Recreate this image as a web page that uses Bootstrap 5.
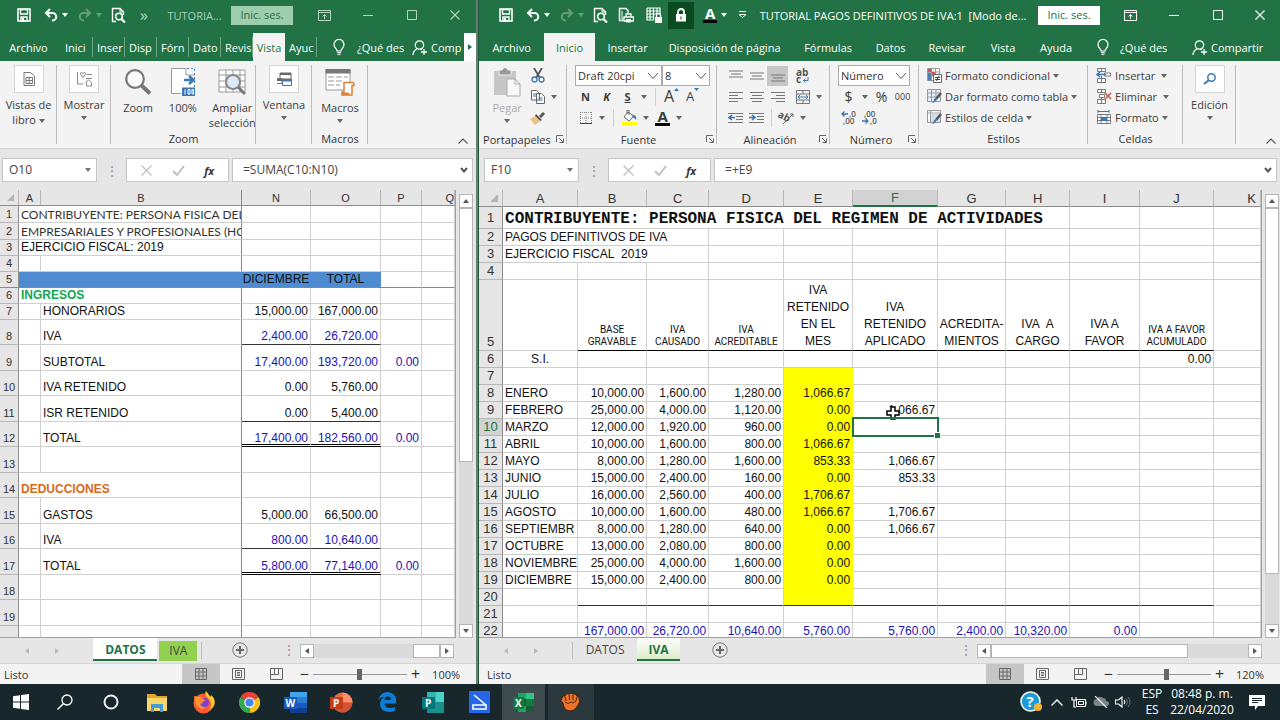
<!DOCTYPE html>
<html lang="es">
<head>
<meta charset="utf-8">
<meta name="viewport" content="width=device-width, initial-scale=1">
<title>Tutorial pagos definitivos de IVA</title>
<link rel="stylesheet" href="https://cdn.jsdelivr.net/npm/bootstrap@5.3.0/dist/css/bootstrap.min.css">
<style>
:root{--xl:#217346;--line:#d0d0d0;--ink:#444;--blue:#1c12b4}
body{font:11px/15px "Open Sans","Noto Sans",sans-serif;color:#333;background:#e6e6e6}
button{font:inherit;color:inherit;background:none;border:0;padding:0;white-space:nowrap}
svg{display:block;flex:none}
.desk{height:100vh;min-height:500px}
.desk main{min-height:0}
.win-l{flex:0 0 37.35%;border-right:2px solid #6d7a72;min-width:0}
.win-r{flex:1 1 0;min-width:0;border-left:1px solid #1c5a38}
.bar{display:grid;align-items:center}
.bar>*{min-width:0}
.ic{display:flex;align-items:center;justify-content:center;gap:4px}
.dd{display:inline-block;border:3px solid transparent;border-top:4px solid currentColor;border-bottom:0;vertical-align:middle;flex:none}
.ribbon .dd{color:#666}
.abar{border-bottom:3px solid #000;line-height:13px;font-weight:700;font-size:15px;padding:0 2px}
.title-l{grid-template-columns:10px 28px 36px 32px 24px 28px 1fr 71px 44px 44px 44px 42px;height:33px;background:var(--xl);color:#fff;padding-bottom:3px}
.title-r{grid-template-columns:13px 28px 36px 32px 24px 28px 28px 26px 42px 12px 1fr 70px 44px 44px 44px 40px;height:33px;background:var(--xl);color:#fff;padding-bottom:3px}
.title-l .cap{color:#a9d0b8}
.title-l .wb{color:#b5d6c2}
.faded{opacity:.3}
.login{background:#fff;color:var(--xl);width:62px;height:19px;line-height:18px}
.title-l .login{background:#9fceae;color:#2b6a45}
.locked{background:#0b4b22;height:27px}
.tabs{height:28px;background:var(--xl);color:#fff}
.tabs-l{grid-template-columns:57px 36px 32px 32px 32px 32px 32px 32px 32px 1fr 52px 12px}
.tabs-r{grid-template-columns:65px 51px 65px 129px 78px 47px 66px 46px 60px 1fr 96px}
.tabs button{height:28px;text-align:center}
.tabs .cut{height:20px;text-align:left;padding:0 0 0 4px;border-right:1px solid #6ba685}
.tabs .on{background:#f3f3f3;color:var(--xl)}
.ribbon{height:88px;background:#f3f3f3;border-bottom:1px solid #d2d2d2;align-items:stretch;color:#3c3c3c;position:relative}
.rib-l{grid-template-columns:57px 54px 145px 56px 56px 1fr}
.rib-r{grid-template-columns:88px 150px 113px 89px 169px 95px 53px 1fr}
.grp{position:relative;padding:4px 0 0;display:flex;flex-direction:column;justify-content:space-between}
.grp::after{content:"";position:absolute;right:0;top:4px;bottom:4px;width:1px;background:#bdbdbd}
.grp:last-child::after{display:none}
.glab{height:18px;line-height:17px;text-align:center;color:#333}
.glab.dl{display:flex;justify-content:space-between;align-items:center;padding:0 3px 0 4px}
.big{display:flex;flex-direction:column;align-items:center;line-height:15px;white-space:normal}
.big .pic{height:34px;display:flex;align-items:center;margin-bottom:1px}
.big .boxed{width:30px;height:28px;background:#fff;border:1px solid #d5d5d5;display:flex;align-items:center;justify-content:center;margin-bottom:4px}
.line{display:flex;align-items:center;height:21px}
.line>button{width:21px;display:flex;justify-content:center;align-items:center;height:20px}
.line>button.nar{width:12px}
.line>i.sp{width:1px;height:18px;background:#d0d0d0;margin:0 5px}
.line>button.txt{width:auto;gap:3px;justify-content:flex-start}
.pick{font:11px/18px "Open Sans",sans-serif;color:#333;height:21px;border:1px solid #ababab;border-radius:0;padding:0 16px 0 2px;background-image:url("data:image/svg+xml,%3Csvg xmlns='http://www.w3.org/2000/svg' viewBox='0 0 12 8'%3E%3Cpath d='m1 1 5 5.500L11 1' fill='none' stroke='%23555'/%3E%3C/svg%3E");background-position:right 2px center;background-size:12px}
.fx{background:#e6e6e6;height:41px;padding:9px 3px 8px 2px;display:flex;gap:3px;align-items:stretch}
.win-r .fx{padding-left:5px}
.fx .cell{background:#fff;border:1px solid #c6c6c6;display:flex;align-items:center}
.fx input{border:0;outline:0;width:100%;min-width:0;font:12px/20px "Open Sans",sans-serif;color:#444;padding:0 6px;background:none}
.nbox{width:95px;padding-right:5px}
.fbtn{width:103px;justify-content:space-around;padding:0 4px}
.off{color:#c0c0c0}
.dots{width:23px;display:flex;align-items:center;justify-content:center;color:#999;font-size:14px}
.sheet{flex:1 1 0;min-height:0;display:flex;overflow:hidden}
.gridbox{flex:1 1 0;min-width:0;overflow:hidden;background:#fff;border-right:1px solid #a0a0a0;border-bottom:1px solid #a0a0a0}
.xl{table-layout:fixed;width:100%;border-collapse:separate;border-spacing:0;font:12px/16px "Liberation Sans",Arial,sans-serif;color:#111}
.xl td,.xl th{box-sizing:border-box;padding:0 2px;border-right:1px solid var(--line);border-bottom:1px solid var(--line);vertical-align:bottom;white-space:nowrap;overflow:hidden;text-align:right;font-weight:400}
.xl th{background:#e6e6e6;color:#333;text-align:center;border-color:#b8b8b8;padding:0}
.xl thead th{border-bottom-color:#8d8d8d;vertical-align:middle}
.xl tbody th{border-right-color:#8d8d8d}
.xl tr td.t{text-align:left}
.xl tr td.c{text-align:center}
.xl .b{color:var(--blue)}
.xl td.u{border-bottom:1px solid #333}
.xl td.dbl{border-bottom:3px double #000;line-height:11px}
.one{line-height:15px}
.one tr{height:26px}
.one tr:nth-child(even){height:25px}
.one thead tr{height:16px}
.one tr.s{height:16px}
.one tr.m{height:17px}
.one th{font-size:11px}
.one thead th{line-height:14px}
.one tr>:nth-child(3),.one td.fz{border-right-color:#888}
.one tr>td.nz{border-right-color:var(--line)}
.one tr.frz>*{border-bottom-color:#888}
.one tr.frz .bl{background:#4f8bd0;border-right-color:transparent}
.goth{font-family:Lato,"Open Sans",sans-serif;color:#333}
.two tr{height:17px}
.two th{font-size:13px;line-height:16px}
.two thead th{line-height:15px}
.two tr.r1{height:22px}
.two tr.r1 th{vertical-align:middle}
.two tr.r5{height:71px}
.two tr.r5 td{white-space:normal;line-height:17px;padding:0 1px}
.two tr.r5 td.sm{font:10px/12px Roboto,sans-serif;padding-bottom:2px}
.two .k{border-bottom:1px solid #000}
.two td.y{background:#ff0;border-color:#ff0}
.two tr.ev td.y{border-bottom-color:#333}
.two .mono{font:bold 16px/18px "Liberation Mono",monospace}
.two thead th.hl,.two tbody th.hl{background:#d2d2d2;color:var(--xl)}
.two thead th.hl{border-bottom:2px solid var(--xl);line-height:14px}
.two td.pos{position:relative;overflow:visible}
.selbox{position:absolute;inset:-2px -2px -2px -1px;border:2px solid var(--xl)}
.selbox::after{content:"";position:absolute;right:-3px;bottom:-3px;width:5px;height:5px;background:var(--xl);outline:1px solid #fff}
.cursor{position:absolute;left:33px;top:4px}
.vs{width:14px;margin:4px 3px 0;background:#dadada;display:flex;flex-direction:column}
.win-r .vs{margin-right:1px}
.sb{width:14px;height:14px;background:#fff;border:1px solid #b5b5b5;display:flex;align-items:center;justify-content:center;color:#555;flex:none}
.thumb{background:#fff;border:1px solid #b5b5b5}
.vs .th1{height:61%}
.vs .th2{height:88%}
.up{transform:rotate(180deg)}
.lf{transform:rotate(90deg)}
.rt{transform:rotate(-90deg)}
.stabs{height:26px;background:#e6e6e6;display:flex;align-items:flex-start;color:#444;font-size:12px;border-bottom:1px solid #d4d4d4}
.stabs .arrows{display:flex;align-items:center;height:25px;color:#b9b9b9}
.stab{height:23px;line-height:23px;width:64px}
.stab.act{background:#fff;color:var(--xl);font-weight:700;border-bottom:2px solid var(--xl)}
.stab.green{background:#92d050;width:38px;height:20px;line-height:18px;margin:3px 0 0 2px}
.stab.fade-g{background:linear-gradient(#fff,#dcedc8);width:43px}
.first{margin-left:33px}
.hs{display:flex;height:14px;margin-top:6px;background:#dadada}
.hs-l{width:154px;margin-right:22px}
.hs-l .thumb{width:27px}
.hs-r{width:285px;margin-right:18px}
.hs-r .thumb{width:197px}
.status{height:20px;background:#f3f3f3;display:flex;align-items:center}
.vb{width:38px;height:20px;display:flex;align-items:center;justify-content:center;color:#666}
.vb.on{background:#c6c6c6}
.zoom{appearance:none;width:94px;height:12px;background:linear-gradient(#999,#999) center/100% 1px no-repeat}
.zoom::-webkit-slider-thumb{appearance:none;width:5px;height:11px;background:#666}
.task{height:36px;background:#18272c;color:#fff;display:flex;align-items:stretch}
.task>button{width:46px;display:flex;align-items:center;justify-content:center}
.task>button:first-child{width:42px}
.task .run{background:#3d4a4e;width:43px;margin-right:3px}
.task .run2{background:#2b393e}
.tray>*{width:22px;display:flex;align-items:center;justify-content:center}
.clock{font-size:12px;line-height:16px;text-align:center;width:64px}
.lang{width:36px}
.tiny{font-size:8px;line-height:7px}
</style>
</head>
<body class="overflow-hidden">
<svg width="0" height="0" class="position-absolute" aria-hidden="true">
<symbol id="save" viewBox="0 0 14 14"><path d="M1 1h12v12H1z" fill="none" stroke="currentColor" stroke-width="1.6"/><path d="M3.500 1.500h7V6h-7zM4 9h6v4H4z" fill="none" stroke="currentColor" stroke-width="1.4"/><path d="M5 10h2v3H5z" fill="currentColor"/></symbol>
<symbol id="undo" viewBox="0 0 14 14"><path d="M2 5h6.500a3.700 3.700 0 0 1 0 7.500H8M6 1 2 5l4 4" fill="none" stroke="currentColor" stroke-width="2"/></symbol>
<symbol id="redo" viewBox="0 0 14 14"><path d="M12 5H5.500a3.700 3.700 0 0 0 0 7.500H6M8 1l4 4-4 4" fill="none" stroke="currentColor" stroke-width="2"/></symbol>
<symbol id="prev" viewBox="0 0 15 16"><path d="M5 14.500H1.500v-13H9L12.500 5v3" fill="none" stroke="currentColor" stroke-width="1.400"/><path d="M9 1v4h4" fill="none" stroke="currentColor"/><circle cx="8" cy="9.500" r="3.300" fill="none" stroke="currentColor" stroke-width="1.600"/><path d="m10.500 12 3.500 3.500" stroke="currentColor" stroke-width="2.200"/></symbol>
<symbol id="print" viewBox="0 0 16 16"><path d="M5 13.500H1.500v-12H8l2 2V6" fill="none" stroke="currentColor" stroke-width="1.400"/><path d="M4 4v8h2" fill="none" stroke="currentColor"/><path d="M8 7h5v3H8zM6 10h9.500v4H6z" fill="none" stroke="currentColor" stroke-width="1.300"/><path d="M8 12h5v3.500H8z" fill="currentColor"/></symbol>
<symbol id="glock" viewBox="0 0 16 16"><path d="M1 1h13v6M1 1v12h7M1 4h13M1 7h10M1 10h7M4 1v12M7.500 1v12M11 1v6" fill="none" stroke="currentColor" stroke-width="1.200"/><path d="M9 10h7v6H9z" fill="currentColor"/><path d="M10.500 10V8.500a2 2 0 0 1 4 0V10" fill="none" stroke="currentColor" stroke-width="1.300"/></symbol>
<symbol id="lock" viewBox="0 0 12 14"><path d="M1 6h10v7.500H1z" fill="currentColor"/><path d="M3 6V4a3 3 0 0 1 6 0v2" fill="none" stroke="currentColor" stroke-width="1.800"/><path d="M5.500 8.500h1v3h-1z" fill="#0b4b22"/></symbol>
<symbol id="ropt" viewBox="0 0 13 11"><path d="M.5.5h12v10H.5zM.5 2.500h12" fill="none" stroke="currentColor"/><path d="M6.500 9V4.500M4.500 6.500l2-2 2 2" fill="none" stroke="currentColor"/></symbol>
<symbol id="min" viewBox="0 0 10 10"><path d="M0 5.500h10" stroke="currentColor"/></symbol>
<symbol id="max" viewBox="0 0 10 10"><path d="M.5.5h9v9h-9z" fill="none" stroke="currentColor"/></symbol>
<symbol id="x" viewBox="0 0 10 10"><path d="m.5.5 9 9m0-9-9 9" stroke="currentColor" stroke-width="1.100"/></symbol>
<symbol id="bulb" viewBox="0 0 12 16"><path d="M4 12C4 9.500 1 9 1 5.500a5 5 0 0 1 10 0C11 9 8 9.500 8 12zM4 13.500h4M4.500 15.300h3" fill="none" stroke="currentColor" stroke-width="1.200"/></symbol>
<symbol id="person" viewBox="0 0 15 15"><circle cx="7.500" cy="5" r="4.200" fill="none" stroke="currentColor" stroke-width="1.200"/><path d="M1 15c.3-3.500 1.800-5 4-6.200M8.500 9l1 1M9 12h6M12 9v6" fill="none" stroke="currentColor" stroke-width="1.300"/></symbol>
<symbol id="mag" viewBox="0 0 28 28"><circle cx="11" cy="11" r="8.800" fill="#fbfbfb" stroke="#777" stroke-width="2.200"/><path d="m17.500 17.500 8.500 8" stroke="#777" stroke-width="4"/></symbol>
<symbol id="launch" viewBox="0 0 8 8"><path d="M.5 7V.5H7M3 3l4 4M7.500 3.500v4h-4" fill="none" stroke="#666"/></symbol>
<symbol id="lin" viewBox="0 0 14 8"><path d="M0 1h14M2 4h10M0 7h14" stroke="#777"/></symbol>
<symbol id="all" viewBox="0 0 14 12"><path d="M0 1.500h14M0 4.500h9M0 7.500h14M0 10.500h9" stroke="#777"/></symbol>
<symbol id="alc" viewBox="0 0 14 12"><path d="M0 1.500h14M2 4.500h10M0 7.500h14M2 10.500h10" stroke="#777"/></symbol>
<symbol id="alr" viewBox="0 0 14 12"><path d="M0 1.500h14M5 4.500h9M0 7.500h14M5 10.500h9" stroke="#777"/></symbol>
<symbol id="vgrid" viewBox="0 0 12 12"><path d="M.5.5h11v11H.5zM.5 4h11M.5 8h11M4 0v12M8 0v12" fill="none" stroke="currentColor"/></symbol>
<symbol id="vpage" viewBox="0 0 13 12"><path d="M.5.5h12v11H.5zM3.500 2.500h6v7h-6zM5 4.500h3M5 6h3M5 7.500h3" fill="none" stroke="currentColor"/></symbol>
<symbol id="vbrk" viewBox="0 0 13 12"><path d="M.5.5h12v11H.5zM4.500.5v6h4v-6M.5 6.500h4" fill="none" stroke="currentColor"/></symbol>
<symbol id="plus" viewBox="0 0 16 16"><circle cx="8" cy="8" r="7.200" fill="none" stroke="#777"/><path d="M8 4v8M4 8h8" stroke="#666" stroke-width="2"/></symbol>
<symbol id="chk" viewBox="0 0 13 11"><path d="m1 6 4 4 7-9" fill="none" stroke="#c0c0c0" stroke-width="2"/></symbol>
<symbol id="chev" viewBox="0 0 10 6"><path d="m.5 5.500 4.500-4.500 4.500 4.500" fill="none" stroke="#555" stroke-width="1.100"/></symbol>
<symbol id="chevb" viewBox="0 0 8 6"><path d="m1 1 3 3.500L7 1" fill="none" stroke="#555" stroke-width="2"/></symbol>
</svg>

<div class="desk d-flex flex-column">
<main class="d-flex flex-fill">

<!-- DATOS window -->
<section class="win-l d-flex flex-column">
<header class="bar title-l">
<span></span>
<button class="ic" aria-label="Guardar"><svg width="14" height="14"><use href="#save"/></svg></button>
<button class="ic" aria-label="Deshacer"><svg width="14" height="14"><use href="#undo"/></svg><i class="dd"></i></button>
<button class="ic faded" aria-label="Rehacer"><svg width="14" height="14"><use href="#redo"/></svg><i class="dd"></i></button>
<button class="ic" aria-label="Vista previa"><svg width="15" height="16"><use href="#prev"/></svg></button>
<button class="ic wb fs-6">»</button>
<span class="cap text-center text-truncate">TUTORIA...</span>
<button class="login">Inic. ses.</button>
<button class="ic wb" aria-label="Opciones"><svg width="13" height="11"><use href="#ropt"/></svg></button>
<button class="ic wb" aria-label="Minimizar"><svg width="10" height="10"><use href="#min"/></svg></button>
<button class="ic wb" aria-label="Maximizar"><svg width="10" height="10"><use href="#max"/></svg></button>
<button class="ic wb" aria-label="Cerrar"><svg width="10" height="10"><use href="#x"/></svg></button>
</header>
<nav class="bar tabs tabs-l">
<button>Archivo</button>
<button class="cut ps-2">Inici</button><button class="cut">Inser</button><button class="cut">Disp</button><button class="cut">Fórn</button><button class="cut">Dato</button><button class="cut">Revis</button>
<button class="on">Vista</button><button class="cut">Ayuc</button>
<button class="ic ps-3 gap-2 justify-content-start"><svg width="12" height="16"><use href="#bulb"/></svg><span class="ps-1">¿Qué des</span></button>
<button class="ic justify-content-start"><svg width="15" height="15"><use href="#person"/></svg><span>Comp</span></button>
<button class="on ic bg-white" aria-label="Más"><i class="dd rt"></i></button>
</nav>
<div class="bar ribbon rib-l">
<div class="grp"><button class="big"><span class="boxed"><svg width="12" height="14" viewBox="0 0 12 14"><path d="M1 .5h6.500l4 3.500v9.500H1zM3 5.500h6.500v6H3zM3 8.500h6.500M6.200 5.500v6" fill="none" stroke="#777"/></svg></span><span>Vistas de<br>libro <i class="dd"></i></span></button></div>
<div class="grp"><button class="big"><span class="boxed"><svg width="16" height="16" viewBox="0 0 16 16"><path d="M1.500 1v12H7M4 2.500q1.500-2 3 0 1.500-2 3 0L7 6.500zM11 3.500h5M10 7.500h6M9.500 11.500l3-2.500 3 2.500v3.500h-5v-3.500" fill="none" stroke="#888"/></svg></span><span>Mostrar</span><i class="dd mt-1"></i></button></div>
<div class="grp">
<div class="d-flex justify-content-center gap-2 ps-2">
<button class="big px-1"><span class="pic"><svg width="28" height="28"><use href="#mag"/></svg></span>Zoom</button>
<button class="big px-1"><span class="pic"><svg width="26" height="30" viewBox="0 0 26 30"><path d="M1.500 1.500H16L24 8v18H1.500z" fill="#fff"/><path d="M11 26.500H1.500v-25H16V8h8" fill="none" stroke="#999"/><path d="M17 1.500h7.500V20" fill="none" stroke="#4a7ebb" stroke-dasharray="2 2"/><path d="M14 13h9M19 9l4.500 4-4.500 4" fill="none" stroke="#3b77b7" stroke-width="2.500"/><path d="M12 20.500h13V29H12z" fill="#3b77b7"/><path d="M15 22.500v5M18 22.500h2v4.500h-2zM22 22.500h1.500v4.500H22z" fill="none" stroke="#fff"/></svg></span>100%</button>
<button class="big"><span class="pic"><svg width="28" height="28" viewBox="0 0 28 28"><path d="M1 2h26v22H1zM1 7h26M1 13h26M1 19h26M8 2v22M15 2v22M22 2v22" fill="#fff" stroke="#999"/><circle cx="15" cy="14" r="7" fill="#dfe8f5" stroke="#888" stroke-width="2"/><path d="m20 19 7 7" stroke="#777" stroke-width="3"/></svg></span>Ampliar<br>selección</button>
</div>
<div class="glab">Zoom</div></div>
<div class="grp"><button class="big"><span class="boxed"><svg width="16" height="15" viewBox="0 0 16 15"><path d="M4 1h11v6H4z" fill="#fff" stroke="#666"/><path d="M4 1h11v2H4zM1 7h6v2H1z" fill="#666"/><path d="M6.500 7.500h9v6h-9z" fill="#fff" stroke="#3b77b7"/><path d="M6 7h10v2.500H6z" fill="#3b77b7"/><path d="M1 6.500h5v5H1" fill="none" stroke="#777"/></svg></span><span>Ventana</span><i class="dd mt-1"></i></button></div>
<div class="grp"><button class="big"><span class="pic"><svg width="30" height="28" viewBox="0 0 30 28"><path d="M1 2h24v20H1z" fill="#fff" stroke="#999"/><path d="M.5 1h25v4.500H.5z" fill="#777"/><path d="M3 9h6M3 13h6M3 17h6M11 9h6M11 13h6M11 17h4M19 9h4" stroke="#999"/><path d="M19 14.500h8.500q2 .5 1.500 3h-2V27H17v-3h2z" fill="#fff" stroke="#dd7f3b" stroke-width="1.500"/><path d="M16.500 24.500H24V27h-7z" fill="#dd7f3b"/></svg></span>Macros<i class="dd mt-1"></i></button><div class="glab">Macros</div></div>
<div class="grp align-items-end justify-content-end pb-1 pe-2"><button aria-label="Contraer"><svg width="10" height="6"><use href="#chev"/></svg></button></div>
</div>
<div class="fx">
<div class="cell nbox"><input aria-label="Cuadro de nombres" value="O10"><i class="dd text-secondary"></i></div>
<div class="dots">⋮</div>
<div class="cell fbtn"><button aria-label="Cancelar" class="off"><svg width="11" height="11"><use href="#x"/></svg></button><button aria-label="Introducir"><svg width="13" height="11"><use href="#chk"/></svg></button><button class="fst-italic fw-bold">fx</button></div>
<div class="cell flex-fill pe-1 ps-1"><input aria-label="Fórmula" value="=SUMA(C10:N10)"><svg width="8" height="6"><use href="#chevb"/></svg></div>
</div>
<div class="sheet">
<div class="gridbox">
<table class="xl one">
<colgroup><col style="width:19px"><col style="width:22px"><col style="width:201px"><col style="width:69px"><col style="width:70px"><col style="width:41px"><col></colgroup>
<thead><tr><th><svg class="ms-auto me-1" width="7" height="7"><path d="M7 0v7H0z" fill="#b5b5b5"/></svg></th><th>A</th><th>B</th><th>N</th><th>O</th><th>P</th><th class="text-end">Q</th></tr></thead>
<tbody>
<tr class="m"><th>1</th><td colspan="2" class="t fz goth">CONTRIBUYENTE: PERSONA FISICA DEL</td><td class="nz"></td><td></td><td></td><td></td></tr>
<tr class="m"><th>2</th><td colspan="2" class="t fz goth">EMPRESARIALES Y PROFESIONALES (HO</td><td class="nz"></td><td></td><td></td><td></td></tr>
<tr class="s"><th>3</th><td colspan="2" class="t fz">EJERCICIO FISCAL: 2019</td><td class="nz"></td><td></td><td></td><td></td></tr>
<tr class="s"><th>4</th><td></td><td></td><td></td><td></td><td></td><td></td></tr>
<tr class="s frz"><th>5</th><td colspan="2" class="bl"></td><td class="c bl px-0">DICIEMBRE</td><td class="c bl">TOTAL</td><td></td><td></td></tr>
<tr class="s"><th>6</th><td colspan="2" class="t fz fw-bold" style="color:#12a651">INGRESOS</td><td class="nz"></td><td></td><td></td><td></td></tr>
<tr class="s"><th>7</th><td></td><td class="t">HONORARIOS</td><td>15,000.00</td><td>167,000.00</td><td></td><td></td></tr>
<tr><th>8</th><td></td><td class="t">IVA</td><td class="b u">2,400.00</td><td class="b u">26,720.00</td><td></td><td></td></tr>
<tr><th>9</th><td></td><td class="t">SUBTOTAL</td><td class="b">17,400.00</td><td class="b">193,720.00</td><td class="b">0.00</td><td></td></tr>
<tr><th>10</th><td></td><td class="t">IVA RETENIDO</td><td>0.00</td><td>5,760.00</td><td></td><td></td></tr>
<tr><th>11</th><td></td><td class="t">ISR RETENIDO</td><td class="u">0.00</td><td class="u">5,400.00</td><td></td><td></td></tr>
<tr><th>12</th><td></td><td class="t">TOTAL</td><td class="b dbl">17,400.00</td><td class="b dbl">182,560.00</td><td class="b">0.00</td><td></td></tr>
<tr><th>13</th><td></td><td></td><td></td><td></td><td></td><td></td></tr>
<tr><th>14</th><td colspan="2" class="t fz fw-bold" style="color:#d66a1c">DEDUCCIONES</td><td class="nz"></td><td></td><td></td><td></td></tr>
<tr><th>15</th><td></td><td class="t">GASTOS</td><td>5,000.00</td><td>66,500.00</td><td></td><td></td></tr>
<tr><th>16</th><td></td><td class="t">IVA</td><td class="b u">800.00</td><td class="b u">10,640.00</td><td></td><td></td></tr>
<tr><th>17</th><td></td><td class="t">TOTAL</td><td class="b dbl">5,800.00</td><td class="b dbl">77,140.00</td><td class="b">0.00</td><td></td></tr>
<tr><th>18</th><td></td><td></td><td></td><td></td><td></td><td></td></tr>
<tr><th>19</th><td></td><td></td><td></td><td></td><td></td><td></td></tr>
<tr><th></th><td></td><td></td><td></td><td></td><td></td><td></td></tr>
</tbody></table></div>
<div class="vs"><button class="sb" aria-label="Arriba"><i class="dd up"></i></button><div class="flex-fill"><div class="thumb th1"></div></div><button class="sb" aria-label="Abajo"><i class="dd"></i></button></div>
</div>
<div class="stabs">
<div class="arrows ps-4 gap-4"><i class="dd lf"></i><i class="dd rt me-1"></i></div>
<button class="stab act ms-auto">DATOS</button>
<button class="stab green">IVA</button>
<div class="vr my-1 ms-1"></div>
<button class="mt-1 mx-auto" aria-label="Hoja nueva"><svg width="16" height="16"><use href="#plus"/></svg></button>
<div class="dots pt-1">⋮</div>
<div class="hs hs-l"><button class="sb" aria-label="Izquierda"><i class="dd lf"></i></button><div class="flex-fill"></div><div class="thumb"></div><button class="sb" aria-label="Derecha"><i class="dd rt"></i></button></div>
</div>
<div class="status"><span class="ps-1 me-auto">Listo</span>
<button class="vb on" aria-label="Normal"><svg width="12" height="12"><use href="#vgrid"/></svg></button><button class="vb" aria-label="Diseño"><svg width="13" height="12"><use href="#vpage"/></svg></button><button class="vb" aria-label="Salto"><svg width="13" height="12"><use href="#vbrk"/></svg></button>
<button class="px-1 fs-6">−</button><input class="zoom" type="range" aria-label="Zoom" value="50"><button class="px-1 fs-6">+</button><span class="ps-2 pe-3">100%</span></div>
</section>

<!-- IVA window -->
<section class="win-r d-flex flex-column">
<header class="bar title-r">
<span></span>
<button class="ic" aria-label="Guardar"><svg width="14" height="14"><use href="#save"/></svg></button>
<button class="ic" aria-label="Deshacer"><svg width="14" height="14"><use href="#undo"/></svg><i class="dd"></i></button>
<button class="ic faded" aria-label="Rehacer"><svg width="14" height="14"><use href="#redo"/></svg><i class="dd"></i></button>
<button class="ic" aria-label="Vista previa"><svg width="15" height="16"><use href="#prev"/></svg></button>
<button class="ic" aria-label="Imprimir"><svg width="16" height="16"><use href="#print"/></svg></button>
<button class="ic" aria-label="Bloquear hoja"><svg width="16" height="16"><use href="#glock"/></svg></button>
<button class="ic locked" aria-label="Bloquear celda"><svg width="12" height="14"><use href="#lock"/></svg></button>
<button class="ic"><span class="abar">A</span><i class="dd"></i></button>
<button class="ic" aria-label="Personalizar"><svg width="9" height="8" viewBox="0 0 9 8"><path d="M1 .5h7M1 3.500l3.500 3 3.500-3z" fill="none" stroke="#fff"/></svg></button>
<span class="text-center text-truncate">TUTORIAL PAGOS DEFINITIVOS DE IVA:1&nbsp; [Modo de...</span>
<button class="login">Inic. ses.</button>
<button class="ic" aria-label="Opciones"><svg width="13" height="11"><use href="#ropt"/></svg></button>
<button class="ic" aria-label="Minimizar"><svg width="10" height="10"><use href="#min"/></svg></button>
<button class="ic" aria-label="Maximizar"><svg width="10" height="10"><use href="#max"/></svg></button>
<button class="ic" aria-label="Cerrar"><svg width="10" height="10"><use href="#x"/></svg></button>
</header>
<nav class="bar tabs tabs-r">
<button>Archivo</button><button class="on">Inicio</button><button>Insertar</button><button>Disposición de página</button><button>Fórmulas</button><button>Datos</button><button>Revisar</button><button>Vista</button><button>Ayuda</button>
<button class="ic gap-2 justify-content-start ps-2"><svg width="18" height="16"><use href="#bulb"/></svg><span>¿Qué des</span></button>
<button class="ic justify-content-start ps-2"><svg width="15" height="15"><use href="#person"/></svg><span>Compartir</span></button>
</nav>
<div class="bar ribbon rib-r">
<div class="grp"><div class="d-flex">
<button class="big ms-2" style="width:40px;color:#aaa"><span class="pic"><svg width="28" height="30" viewBox="0 0 28 30"><path d="M1 4h22v24H1z" fill="#c6c6c6"/><path d="M6 3h3q3-5 6 0h3v5H6z" fill="#999" stroke="#eee"/><path d="M14 12h8l5 5v12H14z" fill="#f8f8f8" stroke="#aaa"/><path d="M22 12v5h5" fill="none" stroke="#aaa"/></svg></span>Pegar<i class="dd mt-1"></i></button>
<div>
<div class="line"><button aria-label="Cortar"><svg width="14" height="15" viewBox="0 0 14 15"><path d="m3 0 6 10M11 0 5 10" stroke="#555" stroke-width="1.800"/><circle cx="3.500" cy="11.500" r="2.500" fill="none" stroke="#3b77b7" stroke-width="1.300"/><circle cx="10.500" cy="11.500" r="2.500" fill="none" stroke="#3b77b7" stroke-width="1.300"/></svg></button></div>
<div class="line"><button aria-label="Copiar"><svg width="14" height="14" viewBox="0 0 14 14"><path d="M.5.5h5l3 3V10h-8zM5.500 3.500h5l3 3v7h-8z" fill="#fff" stroke="#666"/><path d="M2 4h3M2 6h3M7.500 8h4M7.500 10h4" stroke="#3b77b7"/></svg></button><button class="nar" aria-label="Más"><i class="dd"></i></button></div>
<div class="line"><button aria-label="Copiar formato"><svg width="15" height="14" viewBox="0 0 15 14"><path d="M9 5 13 1l2 2-4 4z" fill="#555"/><path d="m6 3 6 6-2 1-5-5z" fill="#555"/><path d="m5 5 5 5-5 4-5-6z" fill="#eec27c"/></svg></button></div>
</div></div>
<div class="glab dl"><span>Portapapeles</span><svg width="8" height="8"><use href="#launch"/></svg></div></div>
<div class="grp"><div class="ps-2">
<div class="line"><select class="form-select pick" aria-label="Fuente" style="width:87px"><option>Draft 20cpi</option></select><select class="form-select pick" aria-label="Tamaño" style="width:48px"><option>8</option></select></div>
<div class="line fw-bold"><button>N</button><button class="fst-italic">K</button><button class="text-decoration-underline">S</button><button class="nar" aria-label="Más"><i class="dd"></i></button><i class="sp"></i><button class="fs-6 fw-normal">A<svg class="align-self-start" width="5" height="5"><path d="m0 4 2.500-3 2.500 3z" fill="#3b77b7"/></svg></button><button class="fw-normal" style="font-size:13px">A<svg class="align-self-start" width="5" height="5"><path d="m0 1 2.500 3 2.500-3z" fill="#3b77b7"/></svg></button></div>
<div class="line"><button aria-label="Bordes"><svg width="12" height="12" viewBox="0 0 12 12"><path d="M.5 0v11M6 0v11M11.500 0v11M0 .5h12M0 6h12" stroke="#888" stroke-dasharray="1 1"/><path d="M0 11.500h12" stroke="#444"/></svg></button><button class="nar" aria-label="Más"><i class="dd"></i></button><i class="sp"></i><button aria-label="Relleno"><svg width="15" height="15" viewBox="0 0 15 15"><path d="M6 2 2 7l5 4 5-5zM5 4V0h2v5" fill="#fff" stroke="#666"/><path d="M11 5q4 0 3 5-2-3-4-3z" fill="#3b77b7"/><path d="M0 12h15v3H0z" fill="#ff0"/></svg></button><button class="nar" aria-label="Más"><i class="dd"></i></button><button><span class="abar">A</span></button><button class="nar" aria-label="Más"><i class="dd"></i></button></div>
</div><div class="glab dl"><span class="mx-auto">Fuente</span><svg width="8" height="8"><use href="#launch"/></svg></div></div>
<div class="grp"><div class="ps-2">
<div class="line"><button class="align-items-start pt-1" aria-label="Arriba"><svg width="14" height="8"><use href="#lin"/></svg></button><button aria-label="Medio"><svg width="14" height="8"><use href="#lin"/></svg></button><button class="align-items-end pb-1" style="background:#c6c6c6" aria-label="Abajo"><svg width="14" height="8"><use href="#lin"/></svg></button><button class="ms-1" aria-label="Ajustar texto"><svg width="13" height="16" viewBox="0 0 13 16"><text x="0" y="8" font-size="10" font-weight="700" fill="#555">ab</text><text x="0" y="15" font-size="10" font-weight="700" fill="#555">c</text><path d="M12 9v3.500H7.500M9.500 10.500l-2 2 2 2" fill="none" stroke="#3b77b7"/></svg></button></div>
<div class="line"><button aria-label="Izquierda"><svg width="14" height="12"><use href="#all"/></svg></button><button aria-label="Centro"><svg width="14" height="12"><use href="#alc"/></svg></button><button aria-label="Derecha"><svg width="14" height="12"><use href="#alr"/></svg></button><button class="ms-1" aria-label="Combinar"><svg width="14" height="14" viewBox="0 0 14 14"><path d="M.5.5h13v13H.5zM.5 4h13M.5 10h13M7 0v4M7 10v4" fill="none" stroke="#777"/><path d="M2 7h10M4 5 2 7l2 2M10 5l2 2-2 2" fill="none" stroke="#3b77b7"/></svg></button><button class="nar" aria-label="Más"><i class="dd"></i></button></div>
<div class="line"><button aria-label="Menos sangría"><svg width="15" height="12" viewBox="0 0 15 12"><path d="M0 1.500h15M8 4.500h7M8 7.500h7M0 10.500h15" stroke="#777"/><path d="M1 5.500h6M4 3 1 5.500 4 8" fill="none" stroke="#3b77b7" stroke-width="1.600"/></svg></button><button aria-label="Más sangría"><svg width="15" height="12" viewBox="0 0 15 12"><path d="M0 1.500h15M8 4.500h7M8 7.500h7M0 10.500h15" stroke="#777"/><path d="M0 5.500h6M3 3l3 2.500L3 8" fill="none" stroke="#3b77b7" stroke-width="1.600"/></svg></button><i class="sp mx-1"></i><button aria-label="Orientación"><svg width="17" height="15" viewBox="0 0 17 15"><text x="0" y="9" font-size="10" font-weight="700" fill="#555" transform="rotate(28 4 6)">ab</text><path d="M5 14 15 4M12 4h3v3" fill="none" stroke="#666"/></svg></button><button class="nar" aria-label="Más"><i class="dd"></i></button></div>
</div><div class="glab dl"><span class="mx-auto">Alineación</span><svg width="8" height="8"><use href="#launch"/></svg></div></div>
<div class="grp"><div class="ps-2">
<div class="line"><select class="form-select pick" aria-label="Formato de número" style="width:72px"><option>Número</option></select></div>
<div class="line"><button style="font-size:14px">$</button><button class="nar" aria-label="Más"><i class="dd"></i></button><button style="font-size:14px">%</button><button style="font-size:9px">000</button></div>
<div class="line"><button aria-label="Aumentar decimales"><svg width="15" height="15" viewBox="0 0 15 15"><text x="8" y="7" font-size="8" font-weight="600" fill="#555">,0</text><text x="2" y="14" font-size="8" font-weight="600" fill="#555">,00</text><path d="M1 4h6M3.500 1.500 1 4l2.500 2.500" fill="none" stroke="#3b77b7" stroke-width="1.300"/></svg></button><button aria-label="Disminuir decimales"><svg width="15" height="15" viewBox="0 0 15 15"><text x="2" y="7" font-size="8" font-weight="600" fill="#555">,00</text><text x="8" y="14" font-size="8" font-weight="600" fill="#555">,0</text><path d="M0 11h6M3.500 8.500 6 11l-2.500 2.500" fill="none" stroke="#3b77b7" stroke-width="1.300"/></svg></button></div>
</div><div class="glab dl"><span class="mx-auto">Número</span><svg width="8" height="8"><use href="#launch"/></svg></div></div>
<div class="grp"><div class="ps-2">
<div class="line"><button class="txt"><svg width="15" height="15" viewBox="0 0 15 15"><path d="M.5.5h12v12H.5zM.5 4h12M.5 8h12M4.500 0v12M8.500 0v12" fill="#fff" stroke="#999"/><path d="M1 1h3.500v3H1zM5 4h3v4H5z" fill="#d0563f"/><path d="M1 4.500h3v8H1z" fill="#4a7ebb"/><path d="M6.500 6.500h8v8h-8z" fill="#fff" stroke="#666"/><path d="M8 9.500h5M8 11.500h5M12 8l-3 5" stroke="#444"/></svg>Formato condicional <i class="dd"></i></button></div>
<div class="line"><button class="txt"><svg width="15" height="15" viewBox="0 0 15 15"><path d="M.5.5h13v12H.5zM.5 4h13M.5 8h13M4.500 0v12M9 0v12" fill="#e8eef6" stroke="#999"/><path d="m14 4-5 6" stroke="#555" stroke-width="2.500"/><path d="M10 9q-1 5-6 5 3-1 3-4z" fill="#3b77b7"/></svg>Dar formato como tabla <i class="dd"></i></button></div>
<div class="line"><button class="txt"><svg width="15" height="15" viewBox="0 0 15 15"><path d="M.5.5h13v12H.5zM.5 3h13M3.500 0v12" fill="#fff" stroke="#999"/><path d="M4 3.500h9V12H4z" fill="#cfdcea"/><path d="m14 4-5 6" stroke="#555" stroke-width="2.500"/><path d="M10 9q-1 5-6 5 3-1 3-4z" fill="#3b77b7"/></svg>Estilos de celda <i class="dd"></i></button></div>
</div><div class="glab">Estilos</div></div>
<div class="grp"><div class="ps-2">
<div class="line"><button class="txt"><svg width="16" height="15" viewBox="0 0 16 15"><path d="M1.500.5h8v3h-8zM5.500.5v3M1.500 10.500h8v4h-8zM5.500 8v6M8.500 5h6v3h-6z" fill="#fff" stroke="#777"/><path d="M1 6.500h9M4 4 1 6.500 4 9" fill="none" stroke="#3b77b7" stroke-width="1.500"/></svg>Insertar&nbsp; <i class="dd"></i></button></div>
<div class="line"><button class="txt"><svg width="16" height="15" viewBox="0 0 16 15"><path d="M1.500.5h8v3h-8zM5.500.5v3M1.500 10.500h8v4h-8zM5.500 8v6M3.500 5.500h5v3h-5z" fill="#fff" stroke="#777"/><path d="m9 4 6 6m0-6-6 6" stroke="#d0563f" stroke-width="1.600"/></svg>Eliminar&nbsp; <i class="dd"></i></button></div>
<div class="line"><button class="txt"><svg width="16" height="15" viewBox="0 0 16 15"><path d="M2 1.500h11M2 0v3M13 0v3" stroke="#3b77b7"/><path d="M1.500 4.500h13v9h-13zM1.500 7.500h13M1.500 10.500h13M5 4v10M11 4v10" fill="#fff" stroke="#777"/><path d="M5 7h6v4H5z" fill="#3b77b7"/></svg>Formato <i class="dd"></i></button></div>
</div><div class="glab">Celdas</div></div>
<div class="grp"><button class="big"><span class="boxed"><svg width="14" height="12" viewBox="0 0 14 12"><circle cx="8.500" cy="4.500" r="3.700" fill="none" stroke="#3b77b7" stroke-width="1.500"/><path d="M6 7 1 11" stroke="#3b77b7" stroke-width="2"/></svg></span>Edición<i class="dd mt-1"></i></button></div>
<div class="grp align-items-end justify-content-end pb-1 pe-1"><button aria-label="Contraer"><svg width="10" height="6"><use href="#chev"/></svg></button></div>
</div>
<div class="fx">
<div class="cell nbox"><input aria-label="Cuadro de nombres" value="F10"><i class="dd text-secondary"></i></div>
<div class="dots">⋮</div>
<div class="cell fbtn"><button aria-label="Cancelar" class="off"><svg width="11" height="11"><use href="#x"/></svg></button><button aria-label="Introducir"><svg width="13" height="11"><use href="#chk"/></svg></button><button class="fst-italic fw-bold">fx</button></div>
<div class="cell flex-fill pe-1 ps-1"><input aria-label="Fórmula" value="=+E9"><svg width="8" height="6"><use href="#chevb"/></svg></div>
</div>
<div class="sheet">
<div class="gridbox">
<table class="xl two">
<colgroup><col style="width:24px"><col style="width:75px"><col style="width:69px"><col style="width:62px"><col style="width:75px"><col style="width:69px"><col style="width:85px"><col style="width:68px"><col style="width:64px"><col style="width:70px"><col style="width:74px"><col></colgroup>
<thead><tr><th><svg class="ms-auto me-1" width="8" height="8"><path d="M8 0v8H0z" fill="#b5b5b5"/></svg></th><th>A</th><th>B</th><th>C</th><th>D</th><th>E</th><th class="hl">F</th><th>G</th><th>H</th><th>I</th><th>J</th><th class="text-end pe-1">K</th></tr></thead>
<tbody>
<tr class="r1"><th>1</th><td colspan="8" class="t mono">CONTRIBUYENTE: PERSONA FISICA DEL REGIMEN DE ACTIVIDADES</td><td></td><td></td><td></td></tr>
<tr><th>2</th><td colspan="3" class="t">PAGOS DEFINITIVOS DE IVA</td><td></td><td></td><td></td><td></td><td></td><td></td><td></td><td></td></tr>
<tr><th>3</th><td colspan="3" class="t">EJERCICIO FISCAL&nbsp; 2019</td><td></td><td></td><td></td><td></td><td></td><td></td><td></td><td></td></tr>
<tr><th>4</th><td></td><td></td><td></td><td></td><td></td><td></td><td></td><td></td><td></td><td></td><td></td></tr>
<tr class="r5"><th>5</th><td></td><td class="c k sm">BASE<br>GRAVABLE</td><td class="c k sm">IVA<br>CAUSADO</td><td class="c k sm">IVA<br>ACREDITABLE</td><td class="c k">IVA RETENIDO EN EL<br>MES</td><td class="c k">IVA<br>RETENIDO<br>APLICADO</td><td class="c k">ACREDITA-<br>MIENTOS</td><td class="c k">IVA&nbsp; A<br>CARGO</td><td class="c k">IVA A<br>FAVOR</td><td class="c k sm">IVA A FAVOR<br>ACUMULADO</td><td></td></tr>
<tr><th>6</th><td class="c">S.I.</td><td></td><td></td><td></td><td></td><td></td><td></td><td></td><td></td><td>0.00</td><td></td></tr>
<tr><th>7</th><td></td><td></td><td></td><td></td><td class="y"></td><td></td><td></td><td></td><td></td><td></td><td></td></tr>
<tr><th>8</th><td class="t">ENERO</td><td>10,000.00</td><td>1,600.00</td><td>1,280.00</td><td class="y">1,066.67</td><td></td><td></td><td></td><td></td><td></td><td></td></tr>
<tr><th>9</th><td class="t">FEBRERO</td><td>25,000.00</td><td>4,000.00</td><td>1,120.00</td><td class="y">0.00</td><td class="pos">1,066.67<svg class="cursor" width="14" height="14" viewBox="0 0 14 14"><path d="M5 1h4v4h4v4H9v4H5V9H1V5h4z" fill="#fff" stroke="#000" stroke-width="1.500"/></svg></td><td></td><td></td><td></td><td></td><td></td></tr>
<tr><th class="hl">10</th><td class="t">MARZO</td><td>12,000.00</td><td>1,920.00</td><td>960.00</td><td class="y">0.00</td><td class="pos"><div class="selbox"></div></td><td></td><td></td><td></td><td></td><td></td></tr>
<tr><th>11</th><td class="t">ABRIL</td><td>10,000.00</td><td>1,600.00</td><td>800.00</td><td class="y">1,066.67</td><td></td><td></td><td></td><td></td><td></td><td></td></tr>
<tr><th>12</th><td class="t">MAYO</td><td>8,000.00</td><td>1,280.00</td><td>1,600.00</td><td class="y">853.33</td><td>1,066.67</td><td></td><td></td><td></td><td></td><td></td></tr>
<tr><th>13</th><td class="t">JUNIO</td><td>15,000.00</td><td>2,400.00</td><td>160.00</td><td class="y">0.00</td><td>853.33</td><td></td><td></td><td></td><td></td><td></td></tr>
<tr><th>14</th><td class="t">JULIO</td><td>16,000.00</td><td>2,560.00</td><td>400.00</td><td class="y">1,706.67</td><td></td><td></td><td></td><td></td><td></td><td></td></tr>
<tr><th>15</th><td class="t">AGOSTO</td><td>10,000.00</td><td>1,600.00</td><td>480.00</td><td class="y">1,066.67</td><td>1,706.67</td><td></td><td></td><td></td><td></td><td></td></tr>
<tr><th>16</th><td class="t">SEPTIEMBR</td><td>8,000.00</td><td>1,280.00</td><td>640.00</td><td class="y">0.00</td><td>1,066.67</td><td></td><td></td><td></td><td></td><td></td></tr>
<tr><th>17</th><td class="t">OCTUBRE</td><td>13,000.00</td><td>2,080.00</td><td>800.00</td><td class="y">0.00</td><td></td><td></td><td></td><td></td><td></td><td></td></tr>
<tr><th>18</th><td class="t">NOVIEMBRE</td><td>25,000.00</td><td>4,000.00</td><td>1,600.00</td><td class="y">0.00</td><td></td><td></td><td></td><td></td><td></td><td></td></tr>
<tr><th>19</th><td class="t">DICIEMBRE</td><td>15,000.00</td><td>2,400.00</td><td>800.00</td><td class="y">0.00</td><td></td><td></td><td></td><td></td><td></td><td></td></tr>
<tr class="ev"><th>20</th><td></td><td class="u"></td><td class="u"></td><td class="u"></td><td class="y"></td><td class="u"></td><td class="u"></td><td class="u"></td><td class="u"></td><td class="u"></td><td></td></tr>
<tr><th>21</th><td></td><td></td><td></td><td></td><td></td><td></td><td></td><td></td><td></td><td></td><td></td></tr>
<tr class="b"><th>22</th><td></td><td>167,000.00</td><td>26,720.00</td><td>10,640.00</td><td>5,760.00</td><td>5,760.00</td><td>2,400.00</td><td>10,320.00</td><td>0.00</td><td></td><td></td></tr>
</tbody></table></div>
<div class="vs"><button class="sb" aria-label="Arriba"><i class="dd up"></i></button><div class="flex-fill"><div class="thumb th2"></div></div><button class="sb" aria-label="Abajo"><i class="dd"></i></button></div>
</div>
<div class="stabs">
<div class="arrows ps-4 gap-4"><i class="dd lf"></i><i class="dd rt"></i></div>
<div class="vr my-1 first"></div>
<button class="stab">DATOS</button>
<button class="stab act fade-g">IVA</button>
<button class="mt-1 ms-4" aria-label="Hoja nueva"><svg class="ms-2" width="16" height="16"><use href="#plus"/></svg></button>
<div class="dots pt-1 ms-auto">⋮</div>
<div class="hs hs-r"><button class="sb" aria-label="Izquierda"><i class="dd lf"></i></button><div class="thumb"></div><div class="flex-fill"></div><button class="sb" aria-label="Derecha"><i class="dd rt"></i></button></div>
</div>
<div class="status"><span class="ps-2 me-auto">Listo</span>
<button class="vb on" aria-label="Normal"><svg width="12" height="12"><use href="#vgrid"/></svg></button><button class="vb" aria-label="Diseño"><svg width="13" height="12"><use href="#vpage"/></svg></button><button class="vb" aria-label="Salto"><svg width="13" height="12"><use href="#vbrk"/></svg></button>
<button class="px-1 fs-6">−</button><input class="zoom" type="range" aria-label="Zoom" value="53"><button class="px-1 fs-6">+</button><span class="ps-2 pe-3">120%</span></div>
</section>
</main>

<footer class="task">
<button aria-label="Inicio"><svg width="16" height="16" viewBox="0 0 16 16" fill="#fff"><path d="M0 2.200 7 1.200v6.300H0zM8 1l8-1v7.500H8zM0 8.500h7v6.300l-7-1zM8 8.500h8V16l-8-1z"/></svg></button>
<button aria-label="Buscar"><svg width="16" height="16" viewBox="0 0 16 16"><circle cx="10" cy="6" r="5" fill="none" stroke="#fff" stroke-width="1.300"/><path d="m6.500 9.500-6 6" stroke="#fff" stroke-width="1.500"/></svg></button>
<button aria-label="Cortana"><svg width="16" height="16" viewBox="0 0 16 16"><circle cx="8" cy="8" r="6.500" fill="none" stroke="#eee" stroke-width="2"/></svg></button>
<button aria-label="Explorador"><svg width="22" height="19" viewBox="0 0 22 19"><path d="M1 1h8l2 2h10v15H1z" fill="#e0a52e"/><path d="M1 5h20v13H1z" fill="#fbd66b"/><path d="M5 11h12v8h-3v-4H8v4H5z" fill="#4a9bd4"/></svg></button>
<button aria-label="Firefox"><svg width="23" height="23" viewBox="0 0 23 23"><circle cx="11.500" cy="12.500" r="10" fill="#ff5a36"/><path d="M14 0q-2 4 2 7 6 5 1 12 7-3 5.500-10Q22 6 19 4q0 2-1 2-2-4-4-6z" fill="#ffc928"/><path d="M2 5q3 1 5 1 4 0 6 3-4 0-5 2 1 5 6 4-2 4-7 2Q3 15 2 5z" fill="#ff9a24"/><circle cx="12.500" cy="11.500" r="4.500" fill="#7a40d6"/><path d="M6 9q4-3 8 1-4 0-4 3-3 0-4-4z" fill="#ff8a2a"/></svg></button>
<button aria-label="Chrome"><svg width="21" height="21" viewBox="0 0 20 20"><path d="M10 10 1.300 5A10 10 0 0 1 18.700 5z" fill="#ea4335"/><path d="M10 10 18.700 5A10 10 0 0 1 10 20z" fill="#fbc116"/><path d="M10 10v10A10 10 0 0 1 1.300 5z" fill="#34a853"/><circle cx="10" cy="10" r="5" fill="#fff"/><circle cx="10" cy="10" r="3.900" fill="#4285f4"/></svg></button>
<button aria-label="Word"><svg width="23" height="21" viewBox="0 0 23 21"><path d="M6 0h17v5H6z" fill="#41a5ee"/><path d="M6 5h17v6H6z" fill="#2b7cd3"/><path d="M6 11h17v5H6z" fill="#185abd"/><path d="M6 16h17v5H6z" fill="#103f91"/><path d="M0 5h13v12H0z" fill="#185abd"/><text x="1.500" y="15" font-size="10" font-weight="700" fill="#fff">W</text></svg></button>
<button aria-label="PowerPoint"><svg width="23" height="21" viewBox="0 0 23 21"><circle cx="12.500" cy="10.500" r="10" fill="#ed6c47"/><path d="M12.500.500a10 10 0 0 1 10 10h-10z" fill="#ff8f6b"/><path d="M2.500 10.500h20a10 10 0 0 1-20 0z" fill="#d35230"/><path d="M0 5h13v12H0z" fill="#c43e1c"/><text x="3" y="15" font-size="10" font-weight="700" fill="#fff">P</text></svg></button>
<button aria-label="Edge"><svg width="20" height="20" viewBox="0 0 20 20"><path d="M1 9Q3 0 11 0q8 1 8 8v3.500H7.500Q8 16 13 16q3 0 5-1.200V19q-3 1-6 1-9-.5-9-8 0-5 5-7-6 0-7 4zM7.500 8H14q0-3.500-3.200-3.500T7.500 8z" fill="#0c7dd8"/></svg></button>
<button aria-label="Publisher"><svg width="22" height="21" viewBox="0 0 22 21"><path d="M5 0h17v21H5z" fill="#1a8f8b"/><path d="M5 0h9v10H5z" fill="#36b5ae"/><path d="M14 0h8v10h-8z" fill="#4ad3c8"/><path d="M0 5h13v12H0z" fill="#03787c"/><text x="3" y="15" font-size="10" font-weight="700" fill="#fff">P</text></svg></button>
<button aria-label="Escáner"><svg width="21" height="22" viewBox="0 0 21 22"><path d="M0 0h21v22H0z" fill="#2467e8"/><path d="M5 4 17 14M4 14h13v4H4z" fill="none" stroke="#fff" stroke-width="1.600"/></svg></button>
<button class="run" aria-label="Excel"><svg width="21" height="19" viewBox="0 0 21 19"><path d="M5 0h16v19H5z" fill="#21a366"/><path d="M13 0h8v6h-8z" fill="#33c481"/><path d="M5 6h8v7H5zM13 13h8v6h-8z" fill="#185c37"/><path d="M13 6h8v7h-8z" fill="#107c41"/><path d="M0 4h11v12H0z" fill="#107c41"/><text x="2" y="14" font-size="10" font-weight="700" fill="#fff">X</text></svg></button>
<button class="run2" aria-label="Grabador"><svg width="22" height="20" viewBox="0 0 22 20"><path d="M3 11Q-.5 9 2 6q0-3 3-2 1-4 4-2 2-2 4 0 3-1 4 2 3 0 2 3 2 2 0 4-1 3-3 5-2 3-6 3-5 0-6-4-1-2-1-4z" fill="#e9752b" stroke="#3a1a08"/><path d="M5 4.500 6 9M9 2.500 9.500 8M13 2.500 13 8M17 4.500 16 9M5 10q3 3 6 0 3 2 5-1" fill="none" stroke="#5b2408"/></svg></button>
<div class="tray d-flex ms-auto">
<button aria-label="Ayuda" class="me-1"><svg width="22" height="22" viewBox="0 0 22 22"><circle cx="10.500" cy="10.500" r="9.500" fill="#1b9bd7" stroke="#fff" stroke-width="1.600"/><text x="6.500" y="16" font-size="15" font-weight="700" fill="#fff">?</text><circle cx="18" cy="16" r="4" fill="#f2b233"/></svg></button>
<button aria-label="Iconos ocultos"><svg width="12" height="7" viewBox="0 0 12 7"><path d="m.5 6.500 5.500-5.500 5.500 5.500" fill="none" stroke="#fff" stroke-width="1.300"/></svg></button>
<button aria-label="Batería"><svg width="16" height="12" viewBox="0 0 16 12"><path d="M5.500 3.500h9v7h-9zM7.500 5.500h5v3h-5z" fill="none" stroke="#fff"/><path d="M1 1v3h4V1M3 4v7h2M15 5.500v3" fill="none" stroke="#fff" stroke-width="1.200"/></svg></button>
<button aria-label="OneDrive"><svg width="17" height="12" viewBox="0 0 17 12"><path d="M4 10a3.500 3.500 0 0 1 0-7q2-4 6-1 3 0 3 3 3 0 3 2.500T13 10z" fill="#7b8588"/><path d="m2 0 12 12" stroke="#eee" stroke-width="1.300"/></svg></button>
<button aria-label="Volumen"><svg width="16" height="12" viewBox="0 0 16 12"><path d="M.5 4h3L7 1v10L3.500 8h-3zM9 4q1.500 2 0 4" fill="none" stroke="#fff" stroke-width="1.100"/><path d="M11 2.500q3 3.500 0 7M13 1q4 5 0 10" fill="none" stroke="#667478"/></svg></button>
</div>
<div class="clock lang align-self-center">ESP<br>ES</div>
<div class="clock align-self-center">08:48 p. m.<br>22/04/2020</div>
<button aria-label="Notificaciones"><svg width="16" height="16" viewBox="0 0 16 16"><path d="M0 1h16v11H9l-3 4v-4H0z" fill="#fff"/><path d="M3 4.500h10M3 6.500h10M3 8.500h6" stroke="#18272c"/></svg></button>
</footer>
</div>
<script src="https://cdn.jsdelivr.net/npm/bootstrap@5.3.0/dist/js/bootstrap.bundle.min.js"></script>
</body>
</html>
